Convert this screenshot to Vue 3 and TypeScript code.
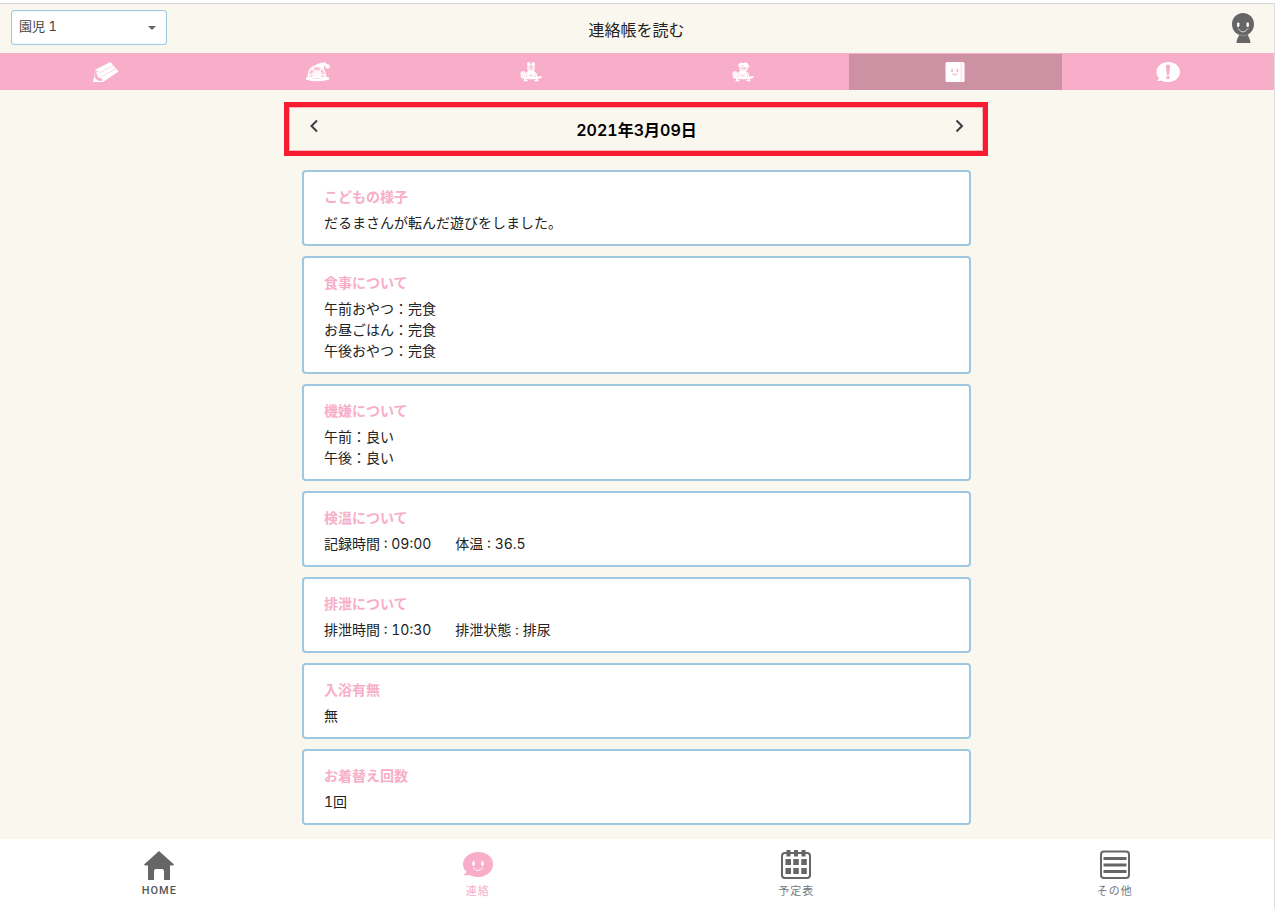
<script setup lang="ts">
import { ref } from 'vue'

interface Card {
  title: string
  lines: string[][]
}

type TabName = 'pencil' | 'sleep' | 'turtle' | 'turtleHat' | 'note' | 'alert'

const child = ref('園児 1')
const activeTab = ref<TabName>('note')
const tabs: { name: TabName; label: string }[] = [
  { name: 'pencil', label: '書く' },
  { name: 'sleep', label: '午睡' },
  { name: 'turtle', label: '登園' },
  { name: 'turtleHat', label: '降園' },
  { name: 'note', label: '連絡帳' },
  { name: 'alert', label: 'お知らせ' },
]

const cards: Card[] = [
  { title: 'こどもの様子', lines: [['だるまさんが転んだ遊びをしました。']] },
  { title: '食事について', lines: [['午前おやつ：完食'], ['お昼ごはん：完食'], ['午後おやつ：完食']] },
  { title: '機嫌について', lines: [['午前：良い'], ['午後：良い']] },
  { title: '検温について', lines: [['記録時間 : 09:00', '体温 : 36.5']] },
  { title: '排泄について', lines: [['排泄時間 : 10:30', '排泄状態 : 排尿']] },
  { title: '入浴有無', lines: [['無']] },
  { title: 'お着替え回数', lines: [['1回']] },
]
</script>

<template>
  <div class="page">
    <div class="app">
      <header class="header">
        <div class="picker">
          <select v-model="child" aria-label="園児">
            <option>園児 1</option>
          </select>
          <svg class="caret" width="8" height="4" viewBox="0 0 8 4" aria-hidden="true"><path d="M0 0h8L4 4z" /></svg>
        </div>
        <h1>連絡帳を読む</h1>
        <button class="profile" type="button" aria-label="プロフィール">
          <svg width="22" height="30" viewBox="0 0 22 30">
            <path fill="#666" d="M11 0C17.500 0 22 5 22 11c0 5-2.500 8.500-6 10.500 0 2.500 2 3 2.500 8.500h-14C5 24.500 7 24 7 21.800 2.500 20 0 16 0 11 0 5 4.500 0 11 0z" />
            <path d="M6.500 21.800q4.500 1.800 9 0" fill="none" stroke="#999" stroke-width=".8" />
            <rect x="5" y="9.500" width="2.400" height="4.500" rx="1" fill="#fff" />
            <rect x="14.500" y="9.500" width="2.400" height="4.500" rx="1" fill="#fff" />
            <path d="M6 15.500q5 7 10 0" fill="none" stroke="#d8d6d2" stroke-width="1" />
          </svg>
        </button>
      </header>

      <nav class="tabs" aria-label="連絡メニュー">
        <button
          v-for="tab in tabs"
          :key="tab.name"
          type="button"
          class="tab"
          :class="{ active: tab.name === activeTab }"
          :aria-label="tab.label"
          @click="activeTab = tab.name"
        >
          <svg v-if="tab.name === 'pencil'" width="26" height="20" viewBox="0 0 26 20">
            <path fill="#fff" d="M0 20L2.500 7.500 17.500 0 25.500 9.500 10 20z" />
            <path fill="#f8aec8" d="M2.500 8.500L5.500 9l1 4 2.500 1.500.5 4.500-5-.5L1.500 15z" />
            <path fill="#fff" d="M3 9.500l3 .3 1 3.400 2.500 1.300L10 18 7.500 16 5 15.500z" />
            <path fill="none" stroke="#fad0de" stroke-width=".8" d="M6.500 11L20 3.500M9 14.500l14-8" />
          </svg>
          <svg v-else-if="tab.name === 'sleep'" width="24" height="20" viewBox="0 0 24 20">
            <path fill="#fff" fill-opacity=".3" d="M2 15C2 8 6 4.500 11 4s8.500 4.500 9 11z" />
            <g fill="none" stroke="#fff" stroke-width="1.400">
              <path d="M2 15.500C2 8 6 4.500 11 4s8.500 4.500 9 11.500z" />
              <path d="M8 8.500L6 6M14 8.500l2-2M5.500 12.500l-3 1M16.500 12.500l3 1M8 16l-1-1M14 16l1-1" />
              <path d="M1 16.500q10 3 21 0" stroke-width="2.600" stroke-linecap="round" />
            </g>
            <path fill="#fff" fill-opacity=".85" d="M8 8.500h6l2.500 4L14 16H8l-2.500-3.500z" />
            <path fill="#fff" d="M7 5Q12 0 19.500.5L22 3.500l-4 .5-.5 3.500Q12 3.500 7 5z" />
            <circle cx="21.500" cy="4.500" r="2.300" fill="#fff" />
          </svg>
          <svg v-else-if="tab.name === 'turtle' || tab.name === 'turtleHat'" width="22" height="20" viewBox="0 0 22 20">
            <path fill="#fff" fill-opacity=".45" d="M4.500 15C5 10.500 7.500 9 11 9s6 1.500 6.500 6z" />
            <g fill="none" stroke="#fff" stroke-width="1.200">
              <path d="M5 15C5.500 10.500 7.500 9 11 9s5.500 1.500 6 6" />
              <path d="M1 15q10 2.400 20.500 0" stroke-width="2" />
              <path d="M5.500 15.500l-1 3h3M16.500 15.500l1 3h-3" stroke-width="1.600" />
            </g>
            <ellipse cx="3" cy="12" rx="2.600" ry="3" fill="#fff" fill-opacity=".85" />
            <path fill="#fff" d="M8.500 9.500h5l2 4-2 2.500h-5l-2-2.500z" />
            <path d="M9 13q2 1.500 4 0" fill="none" stroke="#f8aec8" stroke-width=".8" />
            <g v-if="tab.name === 'turtle'">
              <path fill="#fff" fill-opacity=".5" stroke="#fff" stroke-width="1.200" d="M8 3h6v4.500L12.500 9h-3L8 7.500z" />
              <circle cx="8.700" cy="1.700" r="1.600" fill="#fff" />
              <circle cx="13.300" cy="1.700" r="1.600" fill="#fff" />
              <path stroke="#f8aec8" d="M11 3.500v2.500" />
            </g>
            <g v-else>
              <path fill="#fff" fill-opacity=".5" stroke="#fff" stroke-width="1.200" d="M8 4.500v3L9.500 9h4L15 7.500v-3z" />
              <path fill="#fff" d="M6 3.500Q7 0 11 1q5-1.500 5.500 2.500l1.500 2-4-.5L11 3 7.500 5z" />
              <path stroke="#f8aec8" stroke-width=".8" d="M10 5v1.500M13 5v1.500" />
            </g>
          </svg>
          <svg v-else-if="tab.name === 'note'" width="20" height="20" viewBox="0 0 20 20">
            <rect width="19" height="20" x=".5" rx="1.500" fill="#fff" />
            <path d="M15.500 0h2v20h-2z" fill="#fbe7ee" />
            <path d="M7 7v3M12.500 7v3" stroke="#f8aec8" stroke-width="1.600" />
            <path d="M7 11.500q2.800 2.500 5.500 0" fill="none" stroke="#f8c4d5" stroke-width="1.200" />
          </svg>
          <svg v-else width="24" height="20" viewBox="0 0 24 20">
            <path fill="#fff" d="M12.500 0C18.500 0 24 4 24 10s-5.500 10-11.500 10c-3 0-5-.5-7-1.500L1 19l2-3C1.500 14.500.500 12.500.500 10 .500 4 6 0 12.500 0z" />
            <path fill="#f8aec8" d="M9.800 4q0-1.500 2.200-1.500T14.200 4L13 13h-2z" />
            <circle cx="12" cy="15.500" r="1.800" fill="#f8aec8" />
          </svg>
        </button>
      </nav>

      <main class="main">
        <div class="date">
          <button type="button" aria-label="前の日">
            <svg width="24" height="24" viewBox="0 0 24 24"><path d="M15 6.500L9.500 12l5.500 5.500" /></svg>
          </button>
          <h2>2021年3月09日</h2>
          <button type="button" aria-label="次の日">
            <svg width="24" height="24" viewBox="0 0 24 24"><path d="M9.500 6.500L15 12l-5.500 5.500" /></svg>
          </button>
        </div>
        <div class="cards">
          <section v-for="card in cards" :key="card.title" class="card">
            <h3>{{ card.title }}</h3>
            <p v-for="(line, i) in card.lines" :key="i">
              <span v-for="part in line" :key="part">{{ part }}</span>
            </p>
          </section>
        </div>
      </main>

      <nav class="bottom" aria-label="メインメニュー">
        <a href="#home">
          <svg width="30" height="30" viewBox="0 0 30 30">
            <path fill="#666" d="M15 1l15 13.500-1 1h-3V30H20v-9q0-2-2-2h-6q-2 0-2 2v9H4V15.500H1l-1-1z" />
          </svg>
          <span class="latin">HOME</span>
        </a>
        <a href="#contact" class="current" aria-current="page">
          <svg width="30" height="30" viewBox="0 0 30 30">
            <path fill="#f8aec8" d="M15 2C23 2 30 6.500 30 14S23.500 27 15 27c-3 0-6-.5-8.500-2L.500 25.500 3.500 22C1.500 20 0 17.500 0 14.500 0 7 7 2 15 2z" />
            <ellipse cx="10.500" cy="13.500" rx="1.300" ry="2.600" fill="#fff" />
            <ellipse cx="19.500" cy="13.500" rx="1.300" ry="2.600" fill="#fff" />
            <path d="M10 17.500q5 6 10 0" fill="none" stroke="#fff" stroke-width="1" />
          </svg>
          <span>連絡</span>
        </a>
        <a href="#schedule">
          <svg width="30" height="30" viewBox="0 0 30 30">
            <rect x="1" y="3" width="28" height="25" rx="3" fill="none" stroke="#666" stroke-width="2" />
            <path fill="#666" d="M5.500 0h4v6.500h-4zM13 0h4v6.500h-4zM20.500 0h4v6.500h-4zM4.500 9h5.500v6H4.500zM12.300 9h5.500v6h-5.500zM20.300 9h5.500v6h-5.500zM4.500 18h5.500v6H4.500zM12.300 18h5.500v6h-5.500zM20.300 18h5.500v6h-5.500z" />
          </svg>
          <span>予定表</span>
        </a>
        <a href="#others">
          <svg width="30" height="30" viewBox="0 0 30 30">
            <rect x="1" y="1.500" width="28" height="26.500" rx="3" fill="none" stroke="#666" stroke-width="2" />
            <path stroke="#666" stroke-width="3" d="M3.500 8.500h23M3.500 15h23M3.500 21.500h23" />
          </svg>
          <span>その他</span>
        </a>
      </nav>
    </div>
  </div>
</template>

<style>
body {
  margin: 0;
  background: #fff;
}
</style>

<style scoped>
* {
  box-sizing: border-box;
}
h1, h2, h3, p {
  margin: 0;
}
svg {
  display: block;
}
button {
  border: 0;
  padding: 0;
  background: none;
  cursor: pointer;
}
.page {
  min-height: 100vh;
  padding: 3px 1px 0 0;
  display: flex;
  font-family: Inter, "Noto Sans CJK JP", sans-serif;
  font-variant-numeric: tabular-nums;
  font-size: 14px;
  line-height: 21px;
  color: #222;
}
.app {
  flex: 1;
  display: flex;
  flex-direction: column;
  border-top: 1px solid #d5d5d9;
  border-right: 1px solid #dedee0;
  background: #faf7ef;
}
.header {
  display: grid;
  grid-template-columns: 1fr auto 1fr;
  align-items: center;
  height: 49px;
  padding: 0 20px 2px 11px;
}
.picker {
  position: relative;
  width: 156px;
  height: 35px;
}
.picker select {
  width: 100%;
  height: 100%;
  padding: 0 24px 2px 7px;
  border: 1px solid #9dcae2;
  border-radius: 3px;
  box-shadow: inset 0 0 1px #9dcae2;
  background: #fff;
  appearance: none;
  font: inherit;
  font-size: 13px;
  color: #444;
}
.caret {
  position: absolute;
  right: 11px;
  top: 16px;
  fill: #666;
  pointer-events: none;
}
.header h1 {
  padding: 5px 0 0 8px;
  font-size: 16px;
  line-height: 24px;
  font-weight: 400;
}
.profile {
  justify-self: end;
}
.tabs {
  display: grid;
  grid-template-columns: repeat(6, 1fr);
  height: 37px;
  padding-top: 1px;
  background: #f8aec8;
}
.tab {
  display: flex;
  align-items: center;
  justify-content: center;
}
.tab.active {
  background: #cc92a3;
}
.main {
  width: 100%;
  max-width: 706px;
  margin: 0 auto;
  padding: 12px 2px 14px 0;
}
.date {
  display: flex;
  align-items: flex-start;
  justify-content: space-between;
  height: 54px;
  padding: 7px 12px 0 13px;
  border: 5px solid #f81c33;
  box-shadow: inset 0 0 0 1px #f9b5b5;
}
.date h2 {
  padding-top: 4px;
  font-size: 16px;
  line-height: 24px;
  font-weight: 600;
  color: #000;
}
.date path {
  fill: none;
  stroke: #3c3c46;
  stroke-width: 2;
}
.cards {
  display: flex;
  flex-direction: column;
  gap: 10px;
  padding: 14px 17px 0 18px;
}
.card {
  padding: 14px 20px 11px;
  border: 2px solid #9dc8e0;
  border-radius: 4px;
  background: #fff;
}
.card h3 {
  margin-bottom: 5px;
  font-size: 14px;
  line-height: 21px;
  font-weight: 700;
  color: #f8aec8;
}
.card p {
  display: flex;
  gap: 24px;
}
.bottom {
  display: grid;
  grid-template-columns: repeat(4, 1fr);
  height: 70px;
  margin-top: auto;
  background: #fff;
}
.bottom a {
  display: flex;
  flex-direction: column;
  align-items: center;
  gap: 3px;
  padding-top: 11px;
  font-size: 11px;
  line-height: 16px;
  letter-spacing: 1px;
  color: #777;
  text-decoration: none;
}
.bottom .current {
  color: #f8aec8;
}
.bottom .latin {
  font-family: Roboto, sans-serif;
  font-weight: 500;
  color: #555;
}
</style>
